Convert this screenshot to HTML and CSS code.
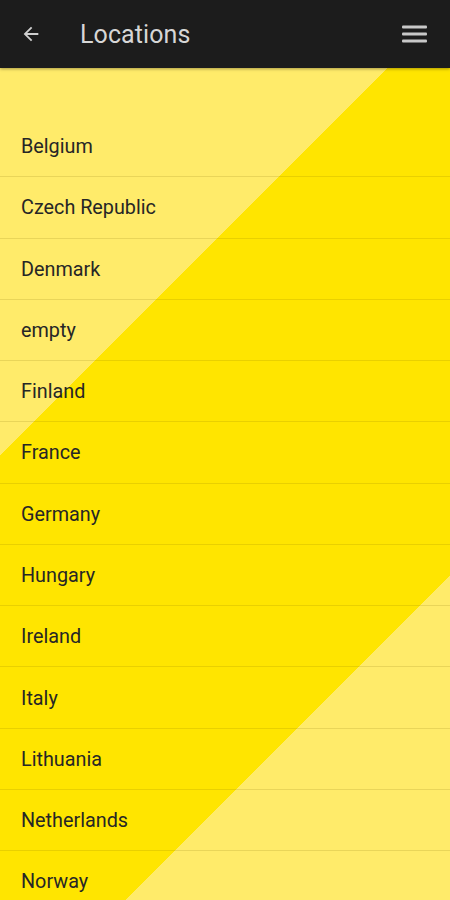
FILE: index.html
```html
<!DOCTYPE html>
<html lang="en">
<head>
<meta charset="utf-8">
<title>Locations</title>
<link rel="stylesheet" href="styles.css">
</head>
<body>
<header class="appbar">
  <button class="icon-btn back" aria-label="Back">
    <svg width="24" height="24" viewBox="0 0 24 24"><path d="M20 11H7.83l5.59-5.59L12 4l-8 8 8 8 1.41-1.41L7.83 13H20v-2z" fill="currentColor"/></svg>
  </button>
  <h1 class="title">Locations</h1>
  <button class="icon-btn menu" aria-label="Menu">
    <svg width="26" height="20" viewBox="0 0 26 20"><rect x="0" y="1.5" width="25" height="3" rx="1" fill="currentColor"/><rect x="0" y="8.5" width="25" height="3" rx="1" fill="currentColor"/><rect x="0" y="15.5" width="25" height="3" rx="1" fill="currentColor"/></svg>
  </button>
</header>
<main class="content">
  <ul class="list">
    <li class="row">Belgium</li>
    <li class="row">Czech Republic</li>
    <li class="row">Denmark</li>
    <li class="row">empty</li>
    <li class="row">Finland</li>
    <li class="row">France</li>
    <li class="row">Germany</li>
    <li class="row">Hungary</li>
    <li class="row">Ireland</li>
    <li class="row">Italy</li>
    <li class="row">Lithuania</li>
    <li class="row">Netherlands</li>
    <li class="row">Norway</li>
  </ul>
</main>
</body>
</html>
```

FILE: styles.css
```css
* { box-sizing: border-box; }
html, body {
  margin: 0;
  padding: 0;
  width: 450px;
  height: 900px;
  overflow: hidden;
  font-family: Roboto, "Noto Sans", sans-serif;
}
body {
  display: flex;
  flex-direction: column;
  background: #ffe500;
}
.appbar {
  height: 68px;
  flex: 0 0 68px;
  background: #1c1c1c;
  display: flex;
  align-items: center;
  position: relative;
  z-index: 2;
  box-shadow: 0 1px 3px rgba(0,0,0,0.35);
}
.icon-btn {
  background: none;
  border: 0;
  padding: 0;
  color: #c4c4c4;
  display: flex;
  align-items: center;
  justify-content: center;
}
.back {
  width: 24px;
  height: 24px;
  margin-left: 19px;
  color: #cfcfcf;
}
.back svg { width: 22px; height: 22px; }
.title {
  margin: 0 0 0 37px;
  font-size: 25px;
  font-weight: 400;
  color: #d6d6d6;
  letter-spacing: 0.1px;
  flex: 1;
}
.menu {
  margin-right: 22px;
  width: 26px;
  height: 20px;
  color: #c8c8c8;
}
.content {
  flex: 1;
  background: linear-gradient(135deg,
    #ffeb6a 0%, #ffeb6a 30.2%,
    #ffe500 30.2%, #ffe500 74.65%,
    #ffeb6a 74.65%, #ffeb6a 100%);
  overflow: hidden;
}
.list {
  list-style: none;
  margin: 0;
  padding: 48px 0 0 0;
}
.row {
  height: 61.27px;
  display: flex;
  align-items: center;
  padding-left: 21px;
  padding-top: 1px;
  font-size: 19.8px;
  color: #262626;
  border-bottom: 1px solid rgba(120, 100, 0, 0.16);
}
```
